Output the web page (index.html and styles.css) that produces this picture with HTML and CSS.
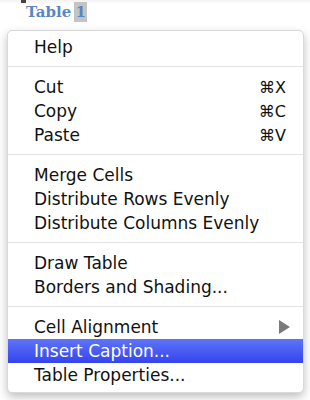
FILE: index.html
```html
<!DOCTYPE html>
<html lang="en">
<head>
    <meta charset="UTF-8">
    <meta name="viewport" content="width=device-width, initial-scale=1.0">
    <title>Table Context Menu</title>
    <link rel="stylesheet" href="styles.css">
</head>
<body>
    <div class="doc">
        <span class="cursor"></span>
        <div class="caption">Table <span class="sel">1</span></div>
    </div>

    <div class="menu">
        <div class="item">Help</div>
        <div class="sep"></div>
        <div class="item">Cut <span class="key">&#8984;X</span></div>
        <div class="item">Copy <span class="key">&#8984;C</span></div>
        <div class="item">Paste <span class="key">&#8984;V</span></div>
        <div class="sep"></div>
        <div class="item">Merge Cells</div>
        <div class="item">Distribute Rows Evenly</div>
        <div class="item">Distribute Columns Evenly</div>
        <div class="sep"></div>
        <div class="item">Draw Table</div>
        <div class="item">Borders and Shading...</div>
        <div class="sep"></div>
        <div class="item">Cell Alignment <span class="arrow"></span></div>
        <div class="item active">Insert Caption...</div>
        <div class="item">Table Properties...</div>
    </div>
</body>
</html>
```

FILE: styles.css
```css
/* page */
body {
    margin: 0;
    width: 310px;
    height: 400px;
    background: #fff;
    font-family: "DejaVu Sans", sans-serif;
    overflow: hidden;
}

.doc {
    height: 30px;
    padding-left: 26px;
    background: linear-gradient(#f2f2f2 0, #fff 4px);
}

.cursor {
    display: block;
    width: 5px;
    height: 3px;
    margin-left: -5px;
    background: #444;
}

.caption {
    font-family: "DejaVu Serif", serif;
    font-weight: bold;
    font-size: 15px;
    color: #5a86c5;
    line-height: 19px;
    word-spacing: -2px;
}

.sel {
    background: #c4c4c4;
    padding: 1px 1px;
}

/* menu */
.menu {
    margin: 0 6px 0 7px;
    padding: 4px 0 5px;
    background: #fff;
    border: 1px solid #d9d9d9;
    border-radius: 5px;
    box-shadow: 0 4px 10px rgba(0, 0, 0, 0.25);
}

.item {
    display: flex;
    align-items: center;
    justify-content: space-between;
    height: 24px;
    padding: 0 17px 0 26px;
    font-size: 17px;
    color: #111;
}

.key {
    font-size: 16px;
}

.sep {
    height: 1px;
    margin: 7px 0 8px;
    background: #e3e3e3;
}

.arrow {
    width: 0;
    height: 0;
    margin-right: -4px;
    border-top: 7px solid transparent;
    border-bottom: 7px solid transparent;
    border-left: 11px solid #7a7a7a;
}

.active {
    color: #fff;
    background: linear-gradient(#5f74f8, #3444ee);
}
```
